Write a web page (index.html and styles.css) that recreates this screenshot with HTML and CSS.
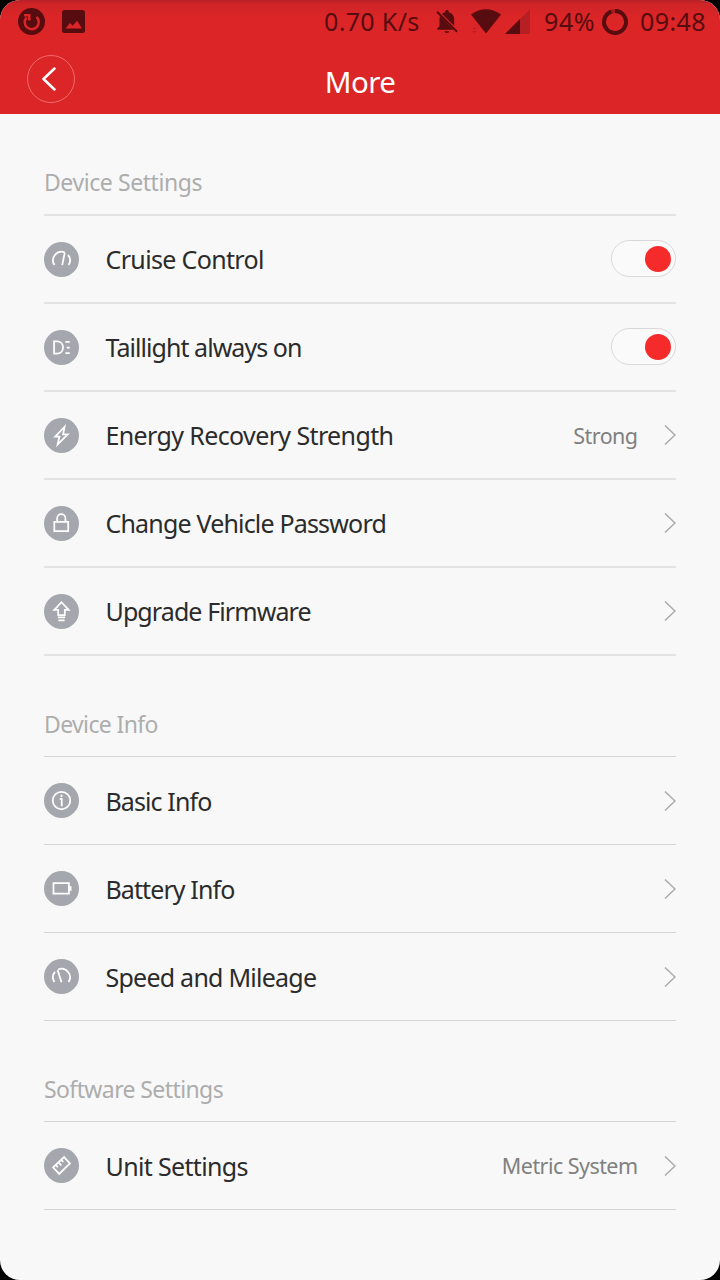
FILE: index.html
```html
<!doctype html>
<html lang="en">
<head>
  <meta charset="utf-8" />
  <meta name="viewport" content="width=device-width,initial-scale=1" />
  <title>More</title>
  <link rel="stylesheet" href="styles.css">
</head>
<body>
  <svg class="defs" width="0" height="0">
    <symbol id="arrow" viewBox="0 0 12 22"><path d="M1 1.500 11 11 1 20.500" /></symbol>
  </svg>

  <div class="screen">
    <header>
      <div class="status">
        <svg class="s-sync" width="27" height="27" viewBox="0 0 27 27">
          <circle class="dark" cx="13.500" cy="13.500" r="13.500" />
          <path class="red-line" d="M18.500 9A7 7 0 1 1 8.500 9.500M6 7.200H11.300V12.500" />
        </svg>
        <svg class="s-pic" width="23" height="23" viewBox="0 0 23 23">
          <rect class="dark" width="23" height="23" rx="2.500" />
          <path class="red" d="M3.500 18.500 8 13l2.700 2.800L15 10.700l5 7.800z" />
        </svg>
        <span class="net">0.70 K/s</span>
        <svg class="s-bell" width="22" height="26" viewBox="0 0 22 26">
          <path class="dark" d="M9.200 2.200a2 2 0 0 1 3.600 0V3.300c3.500 1 5.400 3.700 5.400 7.200v6.500L6 4.800C7 3.900 8 3.500 9.200 3.300zM4 7l13.500 13.700H1.200V19.600L3.500 17.300V10.500C3.500 9.200 3.600 8 4 7zM8.500 22.200h4.700a2.400 2.400 0 0 1-4.700 0z" />
          <path class="dark-line" d="M1 2.800 21 22.700" />
        </svg>
        <svg class="s-wifi" width="30" height="25" viewBox="0 0 30 25">
          <path class="dark" d="M0 5.500Q15-5 30 5.500L15 24.500z" />
          <path class="faint" d="M1.500 20.300 3.500 18l2 2.300zM1.500 22l2 2.300L5.500 22z" />
        </svg>
        <svg class="s-cell" width="25" height="25" viewBox="0 0 25 25">
          <path class="faint" d="M0 25 25 0V25z" />
          <path class="dark" d="M0 25 15 10V25z" />
        </svg>
        <span class="pct">94%</span>
        <svg class="s-batt" width="26" height="26" viewBox="0 0 26 26">
          <circle class="ring-faint" cx="13" cy="13" r="11" />
          <path class="ring" d="M13 2A11 11 0 1 1 9.300 2.650" />
        </svg>
        <span class="clock">09:48</span>
      </div>
      <div class="bar">
        <button class="back" aria-label="Back">
          <svg width="14" height="24" viewBox="0 0 14 24"><path d="M12.500 1.500 1.500 12l11 10.500" /></svg>
        </button>
        <h1>More</h1>
      </div>
    </header>

    <section class="thick">
      <h2 class="t-device">Device Settings</h2>
      <div class="row">
        <svg class="icon" viewBox="0 0 34 34">
          <circle cx="17" cy="17" r="17" />
          <path d="M10.200 22.400A8.200 8.200 0 0 1 20.200 10.250M23.300 12.500A8.200 8.200 0 0 1 23.800 22.400M20.200 10.250 17.700 22.500" />
        </svg>
        <span class="name n-cruise">Cruise Control</span>
        <span class="switch"><i></i></span>
      </div>
      <div class="row">
        <svg class="icon" viewBox="0 0 34 34">
          <circle cx="17" cy="17" r="17" />
          <path d="M9.800 11V23H12.500C20.500 23 20.500 11 12.500 11zM20.800 11.500H25M22 17H25M20.800 22.500H25" />
        </svg>
        <span class="name n-tail">Taillight always on</span>
        <span class="switch"><i></i></span>
      </div>
      <div class="row">
        <svg class="icon" viewBox="0 0 34 34">
          <circle cx="17" cy="17" r="17" />
          <path d="M20 8.500 10.800 18H15L13.200 25.800 23 16H18.500z" />
        </svg>
        <span class="name n-energy">Energy Recovery Strength</span>
        <span class="value">Strong</span>
        <svg class="arrow"><use href="#arrow" /></svg>
      </div>
      <div class="row">
        <svg class="icon" viewBox="0 0 34 34">
          <circle cx="17" cy="17" r="17" />
          <path d="M10 15.500H23.500V24.500H10zM12.800 15.500V12a4 4 0 0 1 8 0V15.500" />
        </svg>
        <span class="name n-pass">Change Vehicle Password</span>
        <svg class="arrow"><use href="#arrow" /></svg>
      </div>
      <div class="row">
        <svg class="icon" viewBox="0 0 34 34">
          <circle cx="17" cy="17" r="17" />
          <path d="M17 8 24 15.500H20.200V20.500H13.800V15.500H10zM13.500 22.800H20.500M14 25.600H20" />
        </svg>
        <span class="name n-fw">Upgrade Firmware</span>
        <svg class="arrow"><use href="#arrow" /></svg>
      </div>
    </section>

    <section>
      <h2 class="t-info">Device Info</h2>
      <div class="row">
        <svg class="icon" viewBox="0 0 34 34">
          <circle cx="17" cy="17" r="17" />
          <path d="M17 8.500a8.500 8.500 0 1 1 0 17a8.500 8.500 0 1 1 0-17M15.300 15.500H17.200V22.500M17 11.500V13.500" />
        </svg>
        <span class="name n-basic">Basic Info</span>
        <svg class="arrow"><use href="#arrow" /></svg>
      </div>
      <div class="row">
        <svg class="icon" viewBox="0 0 34 34">
          <circle cx="17" cy="17" r="17" />
          <path d="M9.200 11.800H24.200V22H9.200zM25.900 14.800V19.300" />
        </svg>
        <span class="name n-batt">Battery Info</span>
        <svg class="arrow"><use href="#arrow" /></svg>
      </div>
      <div class="row">
        <svg class="icon" viewBox="0 0 34 34">
          <circle cx="17" cy="17" r="17" />
          <path d="M10.200 22.400A8.200 8.200 0 0 1 10.700 12.500M13.800 10.250A8.200 8.200 0 0 1 23.800 22.400M13.200 10.800 17 22.500" />
        </svg>
        <span class="name n-speed">Speed and Mileage</span>
        <svg class="arrow"><use href="#arrow" /></svg>
      </div>
    </section>

    <section>
      <h2 class="t-soft">Software Settings</h2>
      <div class="row">
        <svg class="icon" viewBox="0 0 34 34">
          <circle cx="17" cy="17" r="17" />
          <path d="M8.800 18.800 19.500 8.800 25.200 15 14.800 25.200zM11.300 16.500 13.500 18.500M14 14 17 17M16.600 11.500 18.800 13.500" />
        </svg>
        <span class="name n-unit">Unit Settings</span>
        <span class="value">Metric System</span>
        <svg class="arrow"><use href="#arrow" /></svg>
      </div>
    </section>
  </div>
</body>
</html>
```
FILE: styles.css
```css
* { box-sizing:border-box; }
body { margin:0; background:#000; font-family:"Noto Sans", sans-serif; color:#2b2b2b; }
.defs { display:block; }
.screen { width:720px; height:1280px; background:#f8f8f8; border-radius:20px; overflow:hidden; }

/* header */
header { height:114px; background:linear-gradient(#b62026 0, #cf2427 4px, #dc2527 18px); color:#fff; }
.status { display:flex; align-items:center; height:43px; padding:0 0 0 18px; color:#570c0f; font-size:25px; white-space:nowrap; }
.status svg { flex:none; }
.status span { flex:none; line-height:34px; padding-bottom:1px; }
.s-pic { margin-left:17px; }
.net { margin-left:239px; width:97px; letter-spacing:.35px; }
.s-bell { margin-left:15px; }
.s-wifi { margin-left:13px; }
.s-cell { margin-left:4px; }
.pct { margin-left:14px; width:52px; letter-spacing:.6px; }
.s-batt { margin-left:6px; }
.clock { margin-left:12px; letter-spacing:.4px; }
.dark { fill:#570c0f; }
.dark-line { stroke:#570c0f; stroke-width:2; }
.red { fill:#dc2527; }
.red-line { fill:none; stroke:#dc2527; stroke-width:2.500; }
.faint { fill:#b62025; }
.ring { fill:none; stroke:#570c0f; stroke-width:3.800; }
.ring-faint { fill:none; stroke:#a51b20; stroke-width:3.800; }
.bar { display:grid; grid-template-columns:48px 1fr 48px; align-items:center; height:71px; padding:0 27px; }
.back { width:48px; height:48px; padding:0 4px 0 0; border:1px solid #f06a6c; border-radius:50%; background:none; display:flex; align-items:center; justify-content:center; }
.back path { fill:none; stroke:#fff; stroke-width:2.500; stroke-linecap:round; stroke-linejoin:round; }
h1 { margin:7px 0 0; font-size:29.500px; font-weight:400; text-align:center; line-height:40px; letter-spacing:-.6px; }

/* list */
section { padding:0 44px; }
h2 { margin:0; height:101px; padding-top:52px; border-bottom:1px solid #d5d5d5; font-size:23px; font-weight:400; line-height:32px; color:#adadad; }
.row { display:flex; align-items:center; height:88px; border-bottom:1px solid #d5d5d5; white-space:nowrap; }
.thick h2 { height:102px; }
.thick .row, .thick h2 { border-bottom:2px solid #e3e3e3; }
.icon { width:35px; height:35px; flex:none; }
.icon circle { fill:#a5a7ae; }
.icon path { fill:none; stroke:#fff; stroke-width:1.700; }
.name { flex:1; margin-left:26.500px; font-size:25px; }
.value { margin-right:26.500px; font-size:21.500px; letter-spacing:-.55px; color:#808080; }
.arrow { width:12px; height:22px; flex:none; fill:none; stroke:#aaa; stroke-width:1.500; }
.switch { width:65px; height:37px; margin-bottom:2px; padding:5px 4px; border:1px solid #d8d8d8; border-radius:19px; background:#fafafa; display:flex; justify-content:flex-end; }
.switch i { width:26px; height:26px; border-radius:50%; background:#f42a2b; }

/* tracking per label */
.t-device { letter-spacing:-.42px; }
.t-info { letter-spacing:-.63px; }
.t-soft { letter-spacing:-.6px; }
.n-cruise { letter-spacing:-.65px; }
.n-tail { letter-spacing:-.95px; }
.n-energy { letter-spacing:-.62px; }
.n-pass { letter-spacing:-.82px; }
.n-fw { letter-spacing:-.9px; }
.n-basic, .n-batt { letter-spacing:-.9px; }
.n-speed { letter-spacing:-.76px; }
.n-unit { letter-spacing:-.65px; }
```
